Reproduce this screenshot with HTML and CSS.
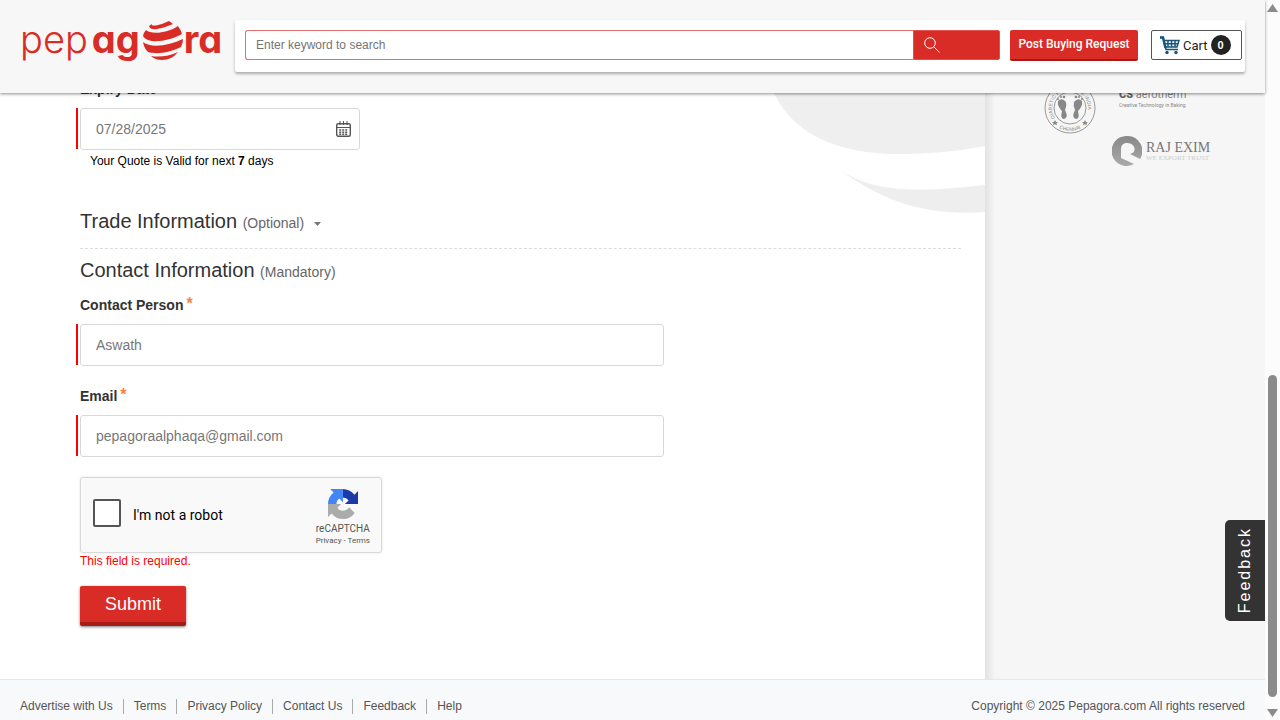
FILE: index.html
```html
<!DOCTYPE html>
<html lang="en">
<head>
<meta charset="utf-8">
<meta name="viewport" content="width=device-width, initial-scale=1">
<title>Pepagora - Send Quote</title>
<link rel="stylesheet" href="styles.css">
</head>
<body>
<div class="page">
  <header class="header">
    <a class="logo" href="#" aria-label="pepagora">
      <span class="logo-thin">pep</span><span class="logo-bold">ag</span>
      <svg class="globe" width="40" height="40" viewBox="0 0 40 40" aria-hidden="true">
        <g fill="#da2c27">
          <path d="M9 3Q8 5 13 4.500Q20 3 26 0L30 3Q21 7 14 8Q7 9 6 5Z"/>
          <path d="M3 9C8 14 25 12 35 5Q38 9 39 13C30 18 18 21 9 20Q2 19 0 15Q1 11 3 9Z"/>
          <path d="M0 21C9 28 27 24 40 18Q40 22 38 26C28 31 14 34 5 31Q1 27 0 21Z"/>
          <path d="M8 35Q22 37 35 31Q29 39 19 39Q12 39 8 35Z"/>
        </g>
      </svg>
      <span class="logo-bold">ra</span>
    </a>
    <div class="toolbar">
      <form class="search">
        <input class="search-input" type="text" placeholder="Enter keyword to search" aria-label="Search">
        <button class="search-button" type="button" aria-label="Search">
          <svg width="16" height="16" viewBox="0 0 16 16" fill="none" stroke="#fff"><circle cx="6" cy="6" r="5.300"/><path d="M10 10L15.500 15.500"/></svg>
        </button>
      </form>
      <button class="post-button" type="button">Post Buying Request</button>
      <button class="cart-button" type="button">
        <svg width="20" height="19" viewBox="0 0 20 19" fill="none" stroke="#17557a" stroke-width="1.500"><path d="M0 1.500H3L6 13.500H18M4 4.500H19L17 11H5.500M5 7.700H18M8 4V11M11.500 4V11M15 4V11"/><path stroke-width="2.500" d="M0 1.500H3L5.500 12"/><g fill="#17557a" stroke="none"><circle cx="7" cy="16.500" r="1.700"/><circle cx="16" cy="16.500" r="1.700"/></g></svg>
        <span>Cart</span><span class="cart-count">0</span>
      </button>
    </div>
  </header>

  <main class="main">
    <section class="content">
      <svg class="swoosh" width="215" height="122" viewBox="0 0 215 122" aria-hidden="true">
        <path fill="#efefef" d="M4 0C22 38 62 61 130 61Q175 61 215 53V0Z"/>
        <path fill="#eee" d="M70 77C105 101 155 99 215 92V119C155 123 115 109 70 77Z"/>
      </svg>
      <form class="quote">
        <label class="label" for="expiry">Expiry Date</label>
        <div class="field field-date">
          <input class="input" id="expiry" type="text" value="07/28/2025">
          <svg class="calendar" width="15" height="16" viewBox="0 0 15 16" fill="none" stroke="#555" aria-hidden="true"><rect x="0.700" y="2.700" width="13.600" height="12.600" rx="1.500" stroke-width="1.400"/><path d="M1 6.500H14M4 0V4M7.500 0V4M11 0V4"/><path stroke-width="1.500" stroke-dasharray="2 1" d="M3.200 9H12M3.200 11.200H12M3.200 13.300H12"/></svg>
        </div>
        <p class="hint">Your Quote is Valid for next <b>7</b> days</p>
        <h2 class="heading heading-trade">Trade Information <small>(Optional)</small><svg class="caret" width="7" height="4" viewBox="0 0 7 4" aria-hidden="true"><path fill="#777" d="M0 0H7L3.500 4Z"/></svg></h2>
        <h2 class="heading heading-contact">Contact Information <small>(Mandatory)</small></h2>
        <label class="label" for="person">Contact Person<span class="star">*</span></label>
        <div class="field"><input class="input" id="person" type="text" value="Aswath"></div>
        <label class="label label-next" for="email">Email<span class="star">*</span></label>
        <div class="field"><input class="input" id="email" type="text" value="pepagoraalphaqa@gmail.com"></div>
        <div class="captcha">
          <input class="captcha-box" type="checkbox" id="robot">
          <label class="captcha-label" for="robot">I'm not a robot</label>
          <div class="captcha-brand">
            <svg width="30" height="30" viewBox="0 0 64 64" aria-hidden="true">
              <path fill="#1c3aa9" d="M64 32V4.500L56.400 12.100C50 4.400 41 0 31.700 0V18L34 18.500Q40 19 44 24.500L36 32Z"/>
              <path fill="#4285f4" d="M31.700 0H4.500L12 7.600C4.500 13.500 0 22 0 32H18Q18 24 24.500 20L32 28Z"/>
              <path fill="#ababab" d="M0 32V59.500L7.600 52C13.500 59.500 22 64 32 64C42 64 51.500 59 57 51L45 39C39 49 24 48 20 40L28 32Z"/>
            </svg>
            <span class="captcha-name">reCAPTCHA</span>
            <span class="captcha-links"><a href="#">Privacy</a> - <a href="#">Terms</a></span>
          </div>
        </div>
        <p class="error">This field is required.</p>
        <button class="submit" type="button">Submit</button>
      </form>
    </section>

    <aside class="partners">
      <svg width="52" height="52" viewBox="0 0 52 52" role="img" aria-label="Diabetic Foot Care India, Chennai">
        <defs><path id="ring-top" d="M11 36A18 18 0 1 1 41 36"/><path id="ring-bottom" d="M3 26A23 23 0 0 0 49 26"/></defs>
        <g fill="none" stroke="#999"><circle cx="26" cy="26" r="25"/><circle cx="26" cy="26" r="16"/></g>
        <g class="seal-text"><text><textPath href="#ring-top">DIABETIC FOOT CARE INDIA</textPath></text><text><textPath href="#ring-bottom" startOffset="50%" text-anchor="middle">CHENNAI</textPath></text></g>
        <g fill="#888">
          <path d="M14 19Q18 15 22 20Q23 24 21 28Q25 36 20 37Q16 37 18 29Q13 24 14 19Z"/>
          <path d="M38 19Q34 15 30 20Q29 24 31 28Q27 36 32 37Q36 37 34 29Q39 24 38 19Z"/>
          <circle cx="14" cy="17" r="1"/><circle cx="17" cy="15" r="1"/><circle cx="20" cy="15" r="1.300"/><circle cx="38" cy="17" r="1"/><circle cx="35" cy="15" r="1"/><circle cx="32" cy="15" r="1.300"/>
          <path d="M11 38l1 2 2 0-1.500 1.300.5 2-2-1-2 1 .5-2L8 40h2zM41 38l1 2 2 0-1.500 1.300.5 2-2-1-2 1 .5-2L38 40h2z"/>
        </g>
      </svg>
      <div class="partner-list">
        <div class="aerotherm"><span><b>CS</b> aerotherm</span><small>Creative Technology in Baking</small></div>
        <div class="raj">
          <svg width="30" height="30" viewBox="0 0 30 30" aria-hidden="true"><defs><linearGradient id="shade" x2="0" y2="1"><stop stop-color="#888"/><stop offset="1" stop-color="#aaa"/></linearGradient></defs><path fill="url(#shade)" fill-rule="evenodd" d="M15 0A15 15 0 0 1 28 23L18 18C25 17 24 7 15 7C11 7 9 9 9 14V22L22 28A15 15 0 1 1 15 0Z"/></svg>
          <div class="raj-name"><span>RAJ EXIM</span><small>WE EXPORT TRUST</small></div>
        </div>
      </div>
    </aside>
  </main>

  <footer class="footer">
    <nav class="links"><a href="#">Advertise with Us</a><a href="#">Terms</a><a href="#">Privacy Policy</a><a href="#">Contact Us</a><a href="#">Feedback</a><a href="#">Help</a></nav>
    <span>Copyright © 2025 Pepagora.com All rights reserved</span>
  </footer>
  <button class="feedback" type="button">Feedback</button>
</div>
<div class="scrollbar" aria-hidden="true">
  <svg width="11" height="8" viewBox="0 0 11 8"><path fill="#8b8b8b" d="M5.500 0L11 8H0Z"/></svg>
  <div class="track"><div class="thumb"></div></div>
  <svg width="11" height="8" viewBox="0 0 11 8"><path fill="#8b8b8b" d="M0 0H11L5.500 8Z"/></svg>
</div>
</body>
</html>
```
FILE: styles.css
```css
* { box-sizing: border-box; }
body {
  margin: 0;
  display: flex;
  min-height: 100vh;
  font-family: "Liberation Sans", Arial, sans-serif;
  font-size: 12px;
  color: #333;
  background: #fff;
}
button, input { font-family: inherit; margin: 0; }
button { cursor: pointer; }
a { color: inherit; text-decoration: none; }
p, h2 { margin: 0; }

.page { flex: 1; min-width: 0; display: flex; flex-direction: column; position: relative; }

.header {
  position: relative;
  z-index: 2;
  display: flex;
  align-items: flex-start;
  gap: 15px;
  padding: 20px 20px 21px;
  background: #f7f7f7;
  box-shadow: 0 1px 3px rgba(0, 0, 0, .45);
}
.logo {
  display: flex;
  flex: none;
  width: 200px;
  height: 42px;
  color: #da2c27;
  font-family: Inter, sans-serif;
  font-size: 38px;
  line-height: 38px;
  font-feature-settings: "cv11";
}
.logo-thin { margin-right: 4px; font-weight: 300; }
.logo-bold { font-weight: 700; }
.globe { flex: none; margin: 1px 1px 0 3px; }

.toolbar {
  flex: 1;
  display: flex;
  align-items: flex-start;
  padding: 10px 3px 11px 10px;
  background: #fff;
  border-radius: 2px;
  box-shadow: 0 2px 3px rgba(0, 0, 0, .3);
}
.search { flex: 1; display: flex; height: 30px; margin-right: 10px; }
.search-input {
  flex: 1;
  min-width: 0;
  padding: 0 10px;
  border: 1px solid #e0706d;
  border-right: 0;
  border-radius: 3px 0 0 3px;
  font-size: 12px;
  outline: 0;
}
.search-input::placeholder { color: #757575; }
.search-button {
  width: 87px;
  display: flex;
  align-items: center;
  padding: 0 10px;
  border: 1px solid #e0504c;
  border-radius: 0 2px 2px 0;
  background: #da2c27;
}
.post-button {
  width: 128px;
  height: 31px;
  margin-right: 13px;
  padding: 0 0 1px;
  border: 0;
  border-bottom: 2px solid #a71b16;
  border-radius: 2px;
  background: #da2c27;
  color: #fff;
  font-family: Roboto, sans-serif;
  font-size: 12px;
  font-weight: 500;
  white-space: nowrap;
}
.cart-button {
  display: flex;
  align-items: center;
  gap: 3px;
  width: 91px;
  height: 30px;
  padding: 0 8px;
  border: 1px solid #555;
  border-radius: 2px;
  background: #fff;
  color: #222;
  font-family: Roboto, sans-serif;
  font-size: 13px;
}
.cart-count {
  width: 20px;
  height: 20px;
  flex: none;
  border-radius: 50%;
  background: #222;
  color: #fff;
  font-family: "Liberation Sans", Arial, sans-serif;
  font-size: 11px;
  font-weight: 700;
  line-height: 21px;
  text-align: center;
}

.main { flex: 1; display: flex; }
.content { flex: 1; position: relative; }
.swoosh { position: absolute; top: 0; right: 0; }
.quote { position: relative; padding: 0 24px 53px 80px; margin-top: -14px; }
.label { display: block; margin-bottom: 9px; font-size: 14px; font-weight: 700; line-height: 20px; }
.label-next { margin-top: 20px; }
.star { margin-left: 3px; color: #ff7f3f; font-size: 16px; line-height: 18px; vertical-align: top; }
.field { position: relative; width: 584px; max-width: 100%; height: 42px; }
.field::before {
  content: "";
  position: absolute;
  left: -4px;
  top: 0;
  width: 2px;
  height: 41px;
  background: #f00;
}
.field-date { width: 280px; }
.input {
  width: 100%;
  height: 100%;
  padding: 0 15px;
  border: 1px solid #d9d9d9;
  border-radius: 3px;
  background: #fff;
  color: #777;
  font-size: 14px;
  outline: 0;
}
.calendar { position: absolute; right: 9px; top: 13px; }
.hint { margin: 1px 0 0 10px; color: #000; line-height: 20px; }
.heading { font-size: 20px; font-weight: 400; line-height: 28px; }
.heading small { color: #666; font-size: 14px; line-height: 1; }
.heading-trade { margin-top: 36px; padding-bottom: 13px; border-bottom: 1px dashed #ddd; }
.heading-contact { margin: 7px 0 11px; }
.caret { margin-left: 10px; vertical-align: 2px; }

.captcha {
  display: flex;
  align-items: center;
  width: 302px;
  height: 76px;
  margin-top: 20px;
  padding: 0 10px 0 12px;
  border: 1px solid #d9d9d9;
  border-radius: 3px;
  background: #f9f9f9;
  box-shadow: 0 0 3px rgba(0, 0, 0, .1);
  color: #000;
  font-family: Roboto, sans-serif;
}
.captcha-box {
  appearance: none;
  width: 28px;
  height: 28px;
  margin-bottom: 4px;
  border: 2px solid #555;
  border-radius: 2px;
  background: #fff;
}
.captcha-label { flex: 1; margin-left: 12px; font-size: 14px; }
.captcha-brand { display: flex; flex-direction: column; align-items: center; padding: 5px 1px 0 0; color: #555; }
.captcha-name { margin-top: 3px; font-size: 10px; line-height: 14px; }
.captcha-links { font-size: 8px; line-height: 10px; }
.error { color: #f00; line-height: 16px; }
.submit {
  display: block;
  width: 106px;
  height: 40px;
  margin-top: 17px;
  padding: 0;
  border: 0;
  border-bottom: 4px solid #a71b16;
  border-radius: 2px;
  background: #da2c27;
  box-shadow: 0 1px 3px rgba(0, 0, 0, .5);
  color: #fff;
  font-size: 18px;
}

.partners {
  flex: 0 0 280px;
  display: flex;
  align-items: flex-start;
  gap: 16px;
  padding-left: 59px;
  background: linear-gradient(90deg, #e2e2e2, #f6f6f6 10px);
}
.partners > svg { flex: none; margin-top: -11px; }
.seal-text { fill: #888; font-size: 5px; }
.aerotherm { margin: -5px 0 0 7px; color: #888; font-family: Roboto, sans-serif; font-size: 11px; line-height: 14px; }
.aerotherm span { display: block; }
.aerotherm b { color: #666; font-weight: 900; }
.aerotherm small { display: block; font-size: 5px; line-height: 6px; }
.raj { display: flex; align-items: center; gap: 4px; margin-top: 28px; color: #777; font-family: "Liberation Serif", serif; }
.raj-name { display: flex; flex-direction: column; font-size: 14px; line-height: 14px; }
.raj-name small { color: #ccc; font-size: 7px; line-height: 7px; }

.footer {
  display: flex;
  justify-content: space-between;
  padding: 19px 20px 6px;
  border-top: 1px solid #e7e7e7;
  background: #f8f9fb;
  color: #555;
  line-height: 15px;
}
.links { display: flex; }
.links a + a { margin-left: 10px; padding-left: 10px; border-left: 1px solid #aaa; }
.feedback {
  position: absolute;
  right: 0;
  top: 520px;
  width: 40px;
  height: 101px;
  padding: 0;
  border: 0;
  border-radius: 5px 0 0 5px;
  background: #333;
  color: #fff;
  font-size: 16px;
  letter-spacing: 2px;
  writing-mode: sideways-lr;
}
.scrollbar {
  flex: 0 0 15px;
  display: flex;
  flex-direction: column;
  align-items: center;
  padding: 4px 0 3px;
  background: #fcfcfc;
}
.track { flex: 1; width: 9px; display: flex; flex-direction: column; justify-content: flex-end; padding-bottom: 12px; }
.thumb { height: 47%; border-radius: 5px; background: #8b8b8b; }
```
